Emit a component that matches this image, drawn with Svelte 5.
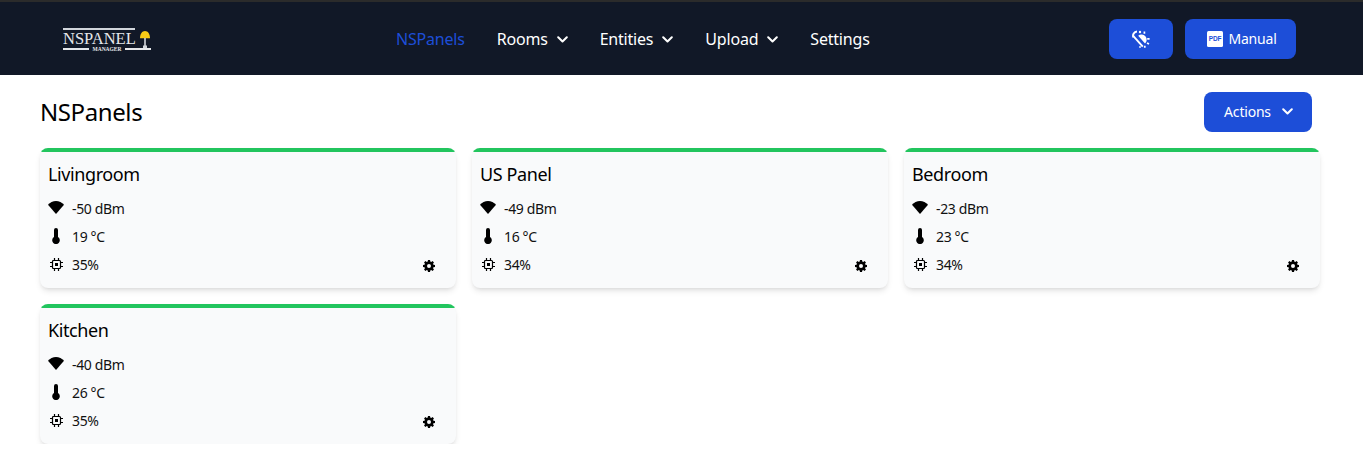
<script>
  const links = [
    { label: 'NSPanels', active: true },
    { label: 'Rooms', caret: true },
    { label: 'Entities', caret: true },
    { label: 'Upload', caret: true },
    { label: 'Settings' }
  ]
  const panels = [
    { name: 'Livingroom', rssi: -50, temp: 19, cpu: 35 },
    { name: 'US Panel', rssi: -49, temp: 16, cpu: 34 },
    { name: 'Bedroom', rssi: -23, temp: 23, cpu: 34 },
    { name: 'Kitchen', rssi: -40, temp: 26, cpu: 35 }
  ]
</script>

{#snippet caret(cls)}
  <svg class={cls} viewBox="0 0 11 7" width="11" height="7" aria-hidden="true">
    <path d="M1.2 1.200l4.300 4.300 4.300-4.300" fill="none" stroke="currentColor" stroke-width="2" stroke-linecap="round" stroke-linejoin="round" />
  </svg>
{/snippet}

<div class="topline"></div>
<nav class="navbar">
  <div class="logo">
    <div class="logo-rule"></div>
    <div class="logo-word">NSPANEL</div>
    <div class="logo-sub"><i></i><span>MANAGER</span><i></i></div>
    <svg class="lamp" viewBox="0 0 10 17" width="10" height="17" aria-hidden="true">
      <path d="M0 7.200C0 2.800 2.200 0 5 0s5 2.800 5 7.200z" fill="#facc15" />
      <rect x="4.200" y="7" width="1.600" height="8" fill="#d1d5db" />
      <rect x="3" y="14.500" width="4" height="2.500" fill="#d1d5db" />
    </svg>
  </div>
  <ul class="menu">
    {#each links as l}
      <li class:active={l.active}>
        {l.label}
        {#if l.caret}{@render caret('menu-caret')}{/if}
      </li>
    {/each}
  </ul>
  <div class="nav-buttons">
    <button class="btn btn-icon" aria-label="Theme">
      <svg viewBox="0 0 18 18" width="18" height="18" fill="none" stroke="#fff" aria-hidden="true">
        <path d="M5 1.600A4.200 4.200 0 0 0 1.400 7.400" stroke-width="2" />
        <circle cx="8" cy="2" r="1.200" fill="#fff" stroke="none" />
        <path d="M1.400 6.200l9.400 10.400" stroke-width="1.900" />
        <path d="M6.200 5.800A5 5 0 0 1 13 13.400z" fill="#fff" stroke="none" />
        <path d="M12.400 1.600v2.200M17.600 8.800h-2.400M17 14l-2-1M8 17.800v-1.600M12.800 17.800v-2" stroke-width="1.700" />
      </svg>
    </button>
    <button class="btn btn-manual">
      <svg viewBox="0 0 16 16" width="16" height="16" aria-hidden="true">
        <rect width="16" height="16" rx="1.500" fill="#fff" />
        <text x="8" y="10.400" text-anchor="middle" class="pdf">PDF</text>
      </svg>
      Manual
    </button>
  </div>
</nav>

<main class="page">
  <header class="page-head">
    <h1>NSPanels</h1>
    <button class="btn btn-actions">Actions {@render caret('actions-caret')}</button>
  </header>
  <div class="grid">
    {#each panels as p}
      <section class="card">
        <h2>{p.name}</h2>
        <div class="card-body">
          <div class="stats">
            <div class="stat">
              <svg class="ic wifi" viewBox="0 0 16 13" width="16" height="13" aria-hidden="true">
                <path d="M0 3.800C2 1.300 4.900 0 8 0s6 1.300 8 3.800L8 13z" fill="#000" />
              </svg>
              <span>{p.rssi} dBm</span>
            </div>
            <div class="stat">
              <svg class="ic" viewBox="0 0 16 16" width="16" height="16" aria-hidden="true">
                <path d="M6 2a2 2 0 0 1 4 0v7a3.800 3.800 0 1 1-4 0z" fill="#000" />
              </svg>
              <span>{p.temp} °C</span>
            </div>
            <div class="stat">
              <svg class="ic chip" viewBox="0 0 13 13" width="13" height="13" aria-hidden="true">
                <rect x="2.500" y="2.500" width="8" height="8" rx="1" fill="none" stroke="#000" stroke-width="1.200" />
                <rect x="5" y="5" width="3" height="3" fill="#000" />
                <path d="M4.500 0v2M8.500 0v2M4.500 11v2M8.500 11v2M0 4.500h2M0 8.500h2M11 4.500h2M11 8.500h2" stroke="#000" stroke-width="1.200" />
              </svg>
              <span>{p.cpu}%</span>
            </div>
          </div>
          <svg class="gear" viewBox="0 0 24 24" width="12" height="12" aria-hidden="true">
            <path fill-rule="evenodd" fill="#000" d="M10 0h4l.6 3.100 1.900.8L19.100 2.100 21.900 4.900 20.100 7.500l.8 1.900L24 10v4l-3.100.6-.8 1.900 1.800 2.600-2.800 2.800-2.600-1.800-1.900.8L14 24h-4l-.6-3.100-1.900-.8-2.600 1.800-2.800-2.800 1.800-2.600-.8-1.900L0 14v-4l3.100-.6.8-1.900L2.100 4.900 4.900 2.100 7.500 3.900l1.900-.8zM12 8a4 4 0 1 0 0 8 4 4 0 0 0 0-8z" />
          </svg>
        </div>
      </section>
    {/each}
  </div>
</main>

<style>
  :global(body) {
    background: #fff;
    font-family: "Noto Sans", "Open Sans", sans-serif;
  }
  .topline {
    height: 2px;
    background: #2b2b2b;
  }
  .navbar {
    height: 73px;
    background: #111827;
    display: flex;
    align-items: center;
    padding: 0 67px 0 63px;
  }
  .logo {
    position: relative;
    width: 88px;
    height: 22px;
    color: #e5e7eb;
    font-family: "Liberation Serif", serif;
  }
  .logo-rule {
    width: 72px;
    height: 2px;
    background: #d1d5db;
  }
  .logo-word {
    font-size: 16.500px;
    line-height: 12px;
    margin-top: 3.500px;
  }
  .logo-sub {
    display: flex;
    align-items: center;
    gap: 3px;
    margin-top: 1.500px;
    font-size: 5.500px;
    font-weight: bold;
    line-height: 5px;
  }
  .logo-sub i {
    flex: 1;
    height: 1.500px;
    background: #e5e7eb;
  }
  .lamp {
    position: absolute;
    right: 1px;
    top: 3px;
  }
  .menu {
    list-style: none;
    margin: 0 0 0 245px;
    padding: 0;
    display: flex;
    gap: 32px;
    color: #fff;
    font-size: 16px;
    letter-spacing: -0.2px;
  }
  .menu li {
    display: flex;
    align-items: center;
    white-space: nowrap;
  }
  .menu li.active {
    color: #1d4ed8;
  }
  .menu-caret {
    margin-left: 9px;
    margin-top: 1px;
  }
  .nav-buttons {
    margin-left: auto;
    display: flex;
    gap: 12px;
  }
  .btn {
    border: 0;
    background: #1d4ed8;
    color: #fff;
    border-radius: 8px;
    height: 40px;
    display: flex;
    align-items: center;
    justify-content: center;
    font-family: inherit;
    font-size: 14px;
    letter-spacing: -0.2px;
    padding: 0;
  }
  .btn-icon {
    width: 64px;
  }
  .btn-manual {
    width: 111px;
    gap: 5px;
    padding-left: 3px;
  }
  .pdf {
    font-family: "Liberation Sans", sans-serif;
    font-size: 6.500px;
    font-weight: bold;
    fill: #1d4ed8;
  }
  .page {
    padding: 17px 43px 0 40px;
  }
  .page-head {
    display: flex;
    align-items: center;
    justify-content: space-between;
    padding-right: 8px;
    margin-bottom: 16px;
  }
  h1 {
    margin: 0;
    font-size: 24px;
    font-weight: 400;
    line-height: 40px;
    letter-spacing: -0.4px;
    color: #000;
  }
  .btn-actions {
    width: 108px;
    gap: 11px;
    padding: 0 0 1px 1px;
  }
  .grid {
    display: grid;
    grid-template-columns: repeat(3, 416px);
    gap: 16px;
  }
  .card {
    height: 140px;
    box-sizing: border-box;
    border-radius: 8px;
    background: #f9fafb linear-gradient(#22c55e, #22c55e) no-repeat;
    background-size: 100% 4px;
    box-shadow: 0 4px 6px -1px rgba(0, 0, 0, 0.1), 0 2px 4px -2px rgba(0, 0, 0, 0.1);
    padding: 12px 8px 8px;
    display: flex;
    flex-direction: column;
  }
  h2 {
    margin: 0;
    font-size: 18px;
    font-weight: 400;
    line-height: 28px;
    letter-spacing: -0.4px;
    color: #000;
  }
  .card-body {
    flex: 1;
    display: flex;
    justify-content: space-between;
    align-items: flex-end;
    padding: 0 13px 6px 0;
  }
  .stats {
    display: flex;
    flex-direction: column;
    gap: 8px;
  }
  .stat {
    display: flex;
    align-items: center;
    height: 20px;
    font-size: 14px;
    letter-spacing: -0.35px;
    color: #111;
  }
  .stat .ic {
    width: 16px;
    margin-right: 8px;
    flex: none;
  }
  .stat .wifi {
    margin-top: -2px;
  }
  .stat .chip {
    width: 13px;
    margin: 0 9px 0 2px;
  }
  .gear {
    margin-bottom: 2px;
  }
</style>
